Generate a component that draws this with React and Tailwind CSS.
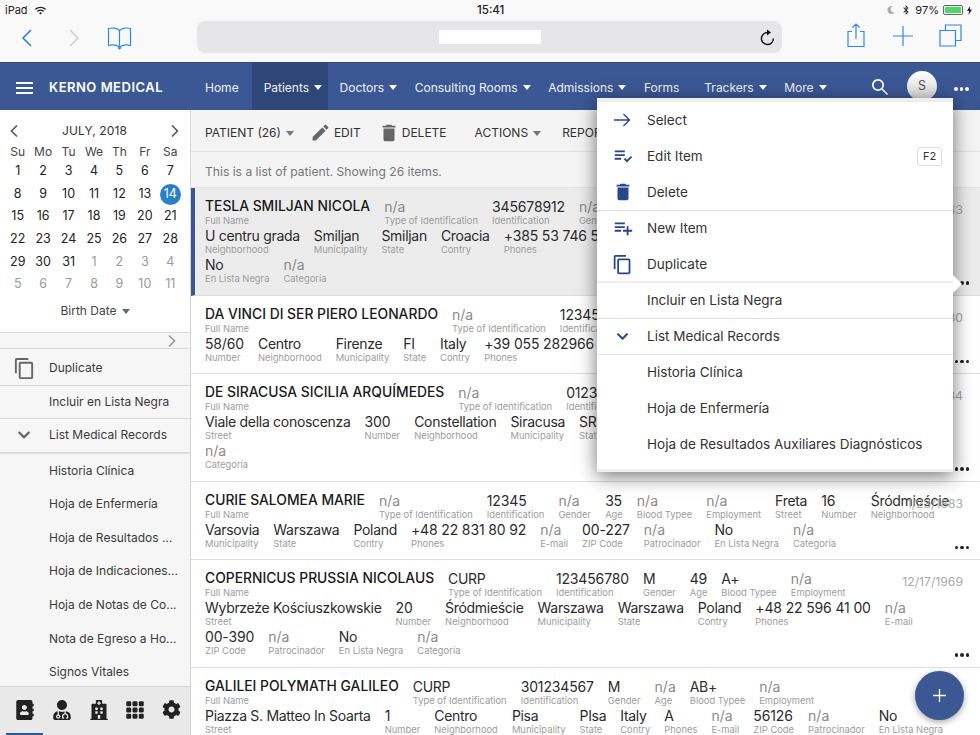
import React from "react";
import { MdPlaylistAddCheck, MdPlaylistAdd, MdDelete, MdContentCopy, MdEdit } from "react-icons/md";
import { FaChevronDown, FaAddressBook, FaUserMd, FaHospital, FaCog, FaWifi, FaBluetoothB, FaMoon } from "react-icons/fa";
import { BsGrid3X3GapFill } from "react-icons/bs";

const Caret = ({ c = "border-t-white" }) => (
  <span className={`inline-block w-0 h-0 ml-[5px] align-middle border-x-[4.5px] border-x-transparent border-t-[5px] ${c}`} />
);

const Chevron = ({ dir = "left", cls = "" }) => (
  <svg width="10" height="14" viewBox="0 0 10 14" fill="none" stroke="currentColor" strokeWidth="1.6" className={cls}>
    <path d={dir === "left" ? "M8 1.5 2.5 7 8 12.5" : "M2 1.5 7.5 7 2 12.5"} />
  </svg>
);

const navItems = [
  ["Home", false, false],
  ["Patients", true, true],
  ["Doctors", true, false],
  ["Consulting Rooms", true, false],
  ["Admissions", true, false],
  ["Forms", false, false],
  ["Trackers", true, false],
  ["More", true, false],
];

const weeks = [
  [1, 2, 3, 4, 5, 6, 7],
  [8, 9, 10, 11, 12, 13, 14],
  [15, 16, 17, 18, 19, 20, 21],
  [22, 23, 24, 25, 26, 27, 28],
  [29, 30, 31, 1, 2, 3, 4],
  [5, 6, 7, 8, 9, 10, 11],
];

const F = ({ v, l, bold }) => {
  const numeric = /^[+0-9]/.test(v);
  const cls = bold
    ? "text-[13.85px] font-medium text-[#1a1a1a]"
    : v === "n/a"
      ? "text-[14px] text-[#8a8a8a]"
      : numeric
        ? "text-[14px] tracking-[-0.15px] text-[#2b2b2b]"
        : "text-[14px] tracking-[-0.3px] text-[#2b2b2b]";
  return (
    <div className="shrink-0 h-[29px]">
      <div className={`h-[19px] leading-[19px] whitespace-nowrap ${cls}`}>{v}</div>
      <div className="h-[10px] leading-[10px] text-[9.4px] text-[#9c9c9c] whitespace-nowrap">{l}</div>
    </div>
  );
};

const Line = ({ items }) => (
  <div className="flex gap-x-[14px] whitespace-nowrap">
    {items.map((it, i) => (
      <F key={i} v={it[0]} l={it[1]} bold={i === 0 && it[1] === "Full Name"} />
    ))}
  </div>
);

const rows = [
  {
    sel: true,
    date: "7/10/1943",
    lines: [
      [["TESLA SMILJAN NICOLA", "Full Name"], ["n/a", "Type of Identification"], ["345678912", "Identification"], ["n/a", "Gender"]],
      [["U centru grada", "Neighborhood"], ["Smiljan", "Municipality"], ["Smiljan", "State"], ["Croacia", "Contry"], ["+385 53 746 530", "Phones"]],
      [["No", "En Lista Negra"], ["n/a", "Categoría"]],
    ],
  },
  {
    date: "4/15/1930",
    lines: [
      [["DA VINCI DI SER PIERO LEONARDO", "Full Name"], ["n/a", "Type of Identification"], ["12345", "Identification"]],
      [["58/60", "Number"], ["Centro", "Neighborhood"], ["Firenze", "Municipality"], ["FI", "State"], ["Italy", "Contry"], ["+39 055 282966", "Phones"]],
    ],
  },
  {
    date: "1/1/1934",
    lines: [
      [["DE SIRACUSA SICILIA ARQUÍMEDES", "Full Name"], ["n/a", "Type of Identification"], ["01234", "Identification"]],
      [["Viale della conoscenza", "Street"], ["300", "Number"], ["Constellation", "Neighborhood"], ["Siracusa", "Municipality"], ["SR", "State"]],
      [["n/a", "Categoría"]],
    ],
  },
  {
    date: "1/23/1883",
    lines: [
      [["CURIE SALOMEA MARIE", "Full Name"], ["n/a", "Type of Identification"], ["12345", "Identification"], ["n/a", "Gender"], ["35", "Age"], ["n/a", "Blood Typee"], ["n/a", "Employment"], ["Freta", "Street"], ["16", "Number"], ["Śródmieście", "Neighborhood"]],
      [["Varsovia", "Municipality"], ["Warszawa", "State"], ["Poland", "Contry"], ["+48 22 831 80 92", "Phones"], ["n/a", "E-mail"], ["00-227", "ZIP Code"], ["n/a", "Patrocinador"], ["No", "En Lista Negra"], ["n/a", "Categoría"]],
    ],
  },
  {
    date: "12/17/1969",
    lines: [
      [["COPERNICUS PRUSSIA NICOLAUS", "Full Name"], ["CURP", "Type of Identification"], ["123456780", "Identification"], ["M", "Gender"], ["49", "Age"], ["A+", "Blood Typee"], ["n/a", "Employment"]],
      [["Wybrzeże Kościuszkowskie", "Street"], ["20", "Number"], ["Śródmieście", "Neighborhood"], ["Warszawa", "Municipality"], ["Warszawa", "State"], ["Poland", "Contry"], ["+48 22 596 41 00", "Phones"], ["n/a", "E-mail"]],
      [["00-390", "ZIP Code"], ["n/a", "Patrocinador"], ["No", "En Lista Negra"], ["n/a", "Categoría"]],
    ],
  },
  {
    lines: [
      [["GALILEI POLYMATH GALILEO", "Full Name"], ["CURP", "Type of Identification"], ["301234567", "Identification"], ["M", "Gender"], ["n/a", "Age"], ["AB+", "Blood Typee"], ["n/a", "Employment"]],
      [["Piazza S. Matteo In Soarta", "Street"], ["1", "Number"], ["Centro", "Neighborhood"], ["Pisa", "Municipality"], ["PIsa", "State"], ["Italy", "Contry"], ["A", "Phones"], ["n/a", "E-mail"], ["56126", "ZIP Code"], ["n/a", "Patrocinador"], ["No", "En Lista Negra"]],
    ],
  },
];

const Dots = ({ cls = "" }) => (
  <span className={`flex gap-[2px] ${cls}`}>
    <i className="block w-[3.5px] h-[3.5px] rounded-full bg-current" />
    <i className="block w-[3.5px] h-[3.5px] rounded-full bg-current" />
    <i className="block w-[3.5px] h-[3.5px] rounded-full bg-current" />
  </span>
);

const MenuRow = ({ icon, label, right }) => (
  <div className="h-[36px] flex items-center text-[13.5px] text-[#333]">
    <span className="w-[50px] flex justify-center pl-[1px] text-[#27468b]">{icon}</span>
    <span className="flex-1 whitespace-nowrap">{label}</span>
    {right}
  </div>
);

const SideRow = ({ icon, label, border }) => (
  <div className={`h-[33.6px] flex items-center text-[12px] text-[#3a3a3a] shrink-0 ${border ? "border-b border-[#d9d9d9]" : ""}`}>
    <span className="w-[49px] flex justify-center text-[#666] pr-[1px]">{icon}</span>
    <span className="whitespace-nowrap">{label}</span>
  </div>
);

export default function App() {
  return (
    <div className="relative w-[980px] h-[735px] overflow-hidden bg-white flex flex-col" style={{ fontFamily: "Inter, 'Liberation Sans', sans-serif" }}>
      {/* iOS status + Safari chrome */}
      <div className="h-[62px] shrink-0 bg-[#f9f9f9] flex flex-col">
        <div className="h-[20px] flex items-center px-[5px] text-[11px] text-[#222] relative">
          <span>iPad</span>
          <FaWifi className="ml-[7px] text-[11px] text-[#222]" />
          <span className="absolute left-[477px] top-[2px] font-medium text-[11.5px]">15:41</span>
          <div className="ml-auto flex items-center gap-[4px] pr-[3px]">
            <FaMoon className="text-[8px] text-[#aaa]" />
            <FaBluetoothB className="text-[10px] ml-[2px]" />
            <span>97%</span>
            <span className="w-[20px] h-[10px] border border-[#666] rounded-[2px] p-[1px] flex">
              <span className="flex-1 bg-[#4cd964]" />
            </span>
            <svg width="5" height="9" viewBox="0 0 5 9"><path d="M3 0 0 5h2L1.5 9 5 3.5H3z" fill="#222" /></svg>
          </div>
        </div>
        <div className="flex-1 flex items-start relative">
          <svg width="12" height="18" viewBox="0 0 12 18" fill="none" stroke="#1f7cf0" strokeWidth="1.5" className="ml-[21px] mt-[9px]"><path d="M10 1 2 9l8 8" /></svg>
          <svg width="12" height="18" viewBox="0 0 12 18" fill="none" stroke="#cfcfcf" strokeWidth="1.5" className="ml-[35px] mt-[9px]"><path d="M2 1l8 8-8 8" /></svg>
          <svg width="25" height="24" viewBox="0 0 25 24" fill="none" stroke="#2f86ee" strokeWidth="1.2" className="ml-[27px] mt-[6px]">
            <path d="M12.5 4.5C10 2 5 1.5 1.5 2.5v17c3.5-1 8-.5 11 1.5 3-2 7.5-2.5 11-1.5v-17C20 1.5 15 2 12.5 4.5zM12.5 4.5V21M11 21.5l1.5 1.5 1.5-1.5" />
          </svg>
          <div className="ml-[65px] mt-px w-[585px] h-[32px] rounded-[8px] bg-[#e6e6e8] flex items-center relative">
            <span className="ml-[242px] w-[102px] h-[14px] bg-white" />
            <svg width="16" height="17" viewBox="0 0 16 17" fill="none" stroke="#111" strokeWidth="1.4" className="ml-auto mr-[7px]">
              <path d="M9 3.6a6 6 0 1 0 5.4 6" />
              <path d="M8 .5l4 3-4 3z" fill="#111" stroke="none" />
            </svg>
          </div>
          <svg width="20" height="25" viewBox="0 0 20 25" fill="none" stroke="#2f86ee" strokeWidth="1.2" className="ml-[64px] mt-[3px]">
            <path d="M6 8.5H2v15h16v-15h-4M10 16V1.5M6.5 4.5 10 1l3.5 3.5" />
          </svg>
          <svg width="20" height="20" viewBox="0 0 20 20" fill="none" stroke="#2f86ee" strokeWidth="1.2" className="ml-[27px] mt-[6px]">
            <path d="M10 0v20M0 10h20" />
          </svg>
          <svg width="23" height="23" viewBox="0 0 23 23" fill="none" stroke="#2f86ee" strokeWidth="1.2" className="ml-[26px] mt-[4px]">
            <path d="M1 6.5h15.5V22H1zM6.5 6V1H22v15.5h-5" />
          </svg>
        </div>
      </div>

      {/* Nav bar */}
      <div className="h-[48px] shrink-0 bg-[#3b5895] border-t border-[#2c4a85] flex items-stretch text-white relative">
        <div className="w-[205px] shrink-0 flex items-center pl-[16px] pt-[2px]">
          <span className="w-[17px] flex flex-col gap-[3px]">
            <i className="block h-[2px] bg-white" /><i className="block h-[2px] bg-white" /><i className="block h-[2px] bg-white" />
          </span>
          <span className="ml-[16px] text-[13px] font-semibold tracking-[0.5px] whitespace-nowrap">KERNO MEDICAL</span>
        </div>
        <div className="flex items-stretch -ml-[12px] text-[12px] text-[#eef1f7]">
          {navItems.map(([t, c, active]) => (
            <div key={t} className={`flex items-center pt-[2px] pl-[12px] whitespace-nowrap ${c ? "pr-[5.5px]" : "pr-[13px]"} ${active ? "bg-[#2f4778]" : ""}`}>
              {t}{c && <Caret />}
            </div>
          ))}
        </div>
        <svg width="18" height="18" viewBox="0 0 18 18" fill="none" stroke="white" strokeWidth="1.7" className="absolute left-[871px] top-[15px]">
          <circle cx="7" cy="7" r="5.2" /><path d="M11 11l5.5 5.5" />
        </svg>
        <div className="absolute left-[907px] top-[8px] w-[30px] h-[30px] rounded-full bg-gradient-to-b from-white to-[#d6d6d6] text-[#555] text-[12.5px] flex items-center justify-center">S</div>
        <Dots cls="absolute left-[954px] top-[24px] text-white" />
      </div>

      {/* Body */}
      <div className="flex-1 flex min-h-0">
        {/* Sidebar */}
        <div className="w-[191px] shrink-0 border-r border-[#d5d5d5] bg-[#f6f6f6] flex flex-col overflow-hidden">
          <div className="bg-white h-[222px] shrink-0 pt-[12px]">
            <div className="flex items-center justify-between pl-[9px] pr-[10px] h-[18px] text-[#555]">
              <Chevron dir="left" />
              <span className="text-[12px] text-[#333] tracking-[0.1px]">JULY, 2018</span>
              <Chevron dir="right" />
            </div>
            <div className="grid grid-cols-7 ml-[5px] w-[178px] mt-[2px] text-center text-[12px] text-[#444] h-[20px] leading-[20px]">
              {["Su", "Mo", "Tu", "We", "Th", "Fr", "Sa"].map((d) => <span key={d}>{d}</span>)}
            </div>
            <div className="mt-[-2px]">
              {weeks.map((w, wi) => (
                <div key={wi} className="grid grid-cols-7 ml-[5px] w-[178px] h-[22.7px] text-center text-[12.5px] items-center">
                  {w.map((d, di) => {
                    const muted = wi === 5 || (wi === 4 && di > 2);
                    const sel = d === 14;
                    return (
                      <span key={di} className="flex justify-center">
                        <span className={sel ? "w-[21px] h-[21px] rounded-full bg-[#2a7fc9] text-white flex items-center justify-center" : muted ? "text-[#9a9a9a]" : "text-[#222]"}>{d}</span>
                      </span>
                    );
                  })}
                </div>
              ))}
            </div>
            <div className="text-center text-[12px] text-[#444] mt-[6px]">Birth Date<Caret c="border-t-[#666]" /></div>
          </div>
          <div className="h-[17px] shrink-0 border-y border-[#d9d9d9] flex items-center justify-end pr-[13px] text-[#999]">
            <Chevron dir="right" />
          </div>
          <div className="flex-1 flex flex-col min-h-0 mt-[3px]">
            <SideRow icon={<MdContentCopy className="text-[23px]" />} label="Duplicate" border />
            <SideRow label="Incluir en Lista Negra" border />
            <SideRow icon={<FaChevronDown className="text-[14px]" />} label="List Medical Records" border />
            <div className="border-t border-[#e3e3e3]" />
            <SideRow label="Historia Clínica" />
            <SideRow label="Hoja de Enfermería" />
            <SideRow label="Hoja de Resultados ..." />
            <SideRow label="Hoja de Indicaciones..." />
            <SideRow label="Hoja de Notas de Co..." />
            <SideRow label="Nota de Egreso a Ho..." />
            <SideRow label="Signos Vitales" />
          </div>
          <div className="h-[49px] shrink-0 bg-[#e9e9e9] border-t border-[#d4d4d4] relative flex items-center justify-between pl-[15px] pr-[9px] pb-[3px] text-[#222]">
            <FaAddressBook className="text-[20px]" />
            <FaUserMd className="text-[20px]" />
            <FaHospital className="text-[20px]" />
            <BsGrid3X3GapFill className="text-[20px]" />
            <FaCog className="text-[19px]" />
            <span className="absolute left-[6px] bottom-0 w-[37px] h-[2px] bg-[#2b5aa0]" />
          </div>
        </div>

        {/* Main */}
        <div className="flex-1 min-w-0 overflow-hidden bg-white">
          <div className="h-[42px] bg-[#f4f4f4] border-b border-[#e2e2e2] flex items-center pl-[14px] pt-[4px] text-[12px] text-[#333] whitespace-nowrap">
            <span>PATIENT (26)<Caret c="border-t-[#777]" /></span>
            <span className="ml-[16px] flex items-center"><MdEdit className="text-[21px] text-[#666] mr-[3px]" />EDIT</span>
            <span className="ml-[17px] flex items-center"><MdDelete className="text-[22px] text-[#666] mr-[2px]" />DELETE</span>
            <span className="ml-[28px]">ACTIONS<Caret c="border-t-[#777]" /></span>
            <span className="ml-[21px]">REPORTS<Caret c="border-t-[#777]" /></span>
          </div>
          <div className="h-[36px] bg-[#f4f4f4] border-b border-[#e2e2e2] flex items-center pl-[14px] pt-[5px] text-[12.1px] text-[#777]">
            This is a list of patient. Showing 26 items.
          </div>
          {rows.map((r, i) => (
            <div key={i} className={`relative overflow-hidden pt-[9px] pb-[10.5px] border-b border-[#dedede] ${r.sel ? "bg-[#ececec] border-l-[4px] border-l-[#3b5895] pl-[10px]" : "pl-[14px]"}`}>
              {r.lines.map((l, j) => <Line key={j} items={l} />)}
              {r.date && <span className="absolute right-[17px] top-[13px] text-[12.2px] text-[#a8a8a8]">{r.date}</span>}
              {r.date && <Dots cls="absolute right-[11px] bottom-[10px] text-[#222]" />}
            </div>
          ))}
        </div>
      </div>

      {/* Context menu */}
      <div className="absolute left-[597px] top-[98px] w-[356px] h-[374px] bg-white shadow-[0_4px_18px_rgba(0,0,0,0.55)] border-t-[4px] border-[#eeeeee] border-b-[3px]">
        <MenuRow icon={
          <svg width="17" height="14" viewBox="0 0 17 14" fill="none" stroke="#27468b" strokeWidth="1.3"><path d="M0 7h15.5M9.5 1l6 6-6 6" /></svg>
        } label="Select" />
        <MenuRow icon={<MdPlaylistAddCheck className="text-[22px]" />} label="Edit Item" right={
          <span className="mr-[11px] w-[25px] h-[19px] rounded-[3px] border border-[#ddd] text-[11px] flex items-center justify-center">F2</span>
        } />
        <MenuRow icon={<MdDelete className="text-[22px]" />} label="Delete" />
        <div className="h-px -mb-px bg-[#ddd]" />
        <MenuRow icon={<MdPlaylistAdd className="text-[22px]" />} label="New Item" />
        <MenuRow icon={<MdContentCopy className="text-[21px]" />} label="Duplicate" />
        <div className="h-[2px] -my-px bg-[#eee]" />
        <MenuRow label="Incluir en Lista Negra" />
        <div className="h-px -mb-px bg-[#e2e2e2]" />
        <MenuRow icon={<FaChevronDown className="text-[13px]" />} label="List Medical Records" />
        <div className="h-px -mb-px bg-[#e2e2e2]" />
        <MenuRow label="Historia Clínica" />
        <MenuRow label="Hoja de Enfermería" />
        <MenuRow label="Hoja de Resultados Auxiliares Diagnósticos" />
        <span className="absolute left-[356px] top-[173px] w-0 h-0 border-y-[9px] border-y-transparent border-l-[9px] border-l-white" />
      </div>

      {/* FAB */}
      <div className="absolute left-[915px] top-[671px] w-[49px] h-[49px] rounded-full bg-[#3b5895] shadow-[0_2px_6px_rgba(0,0,0,0.35)] flex items-center justify-center">
        <svg width="13" height="13" viewBox="0 0 13 13" stroke="white" strokeWidth="1.3"><path d="M6.5 0v13M0 6.5h13" /></svg>
      </div>
    </div>
  );
}
